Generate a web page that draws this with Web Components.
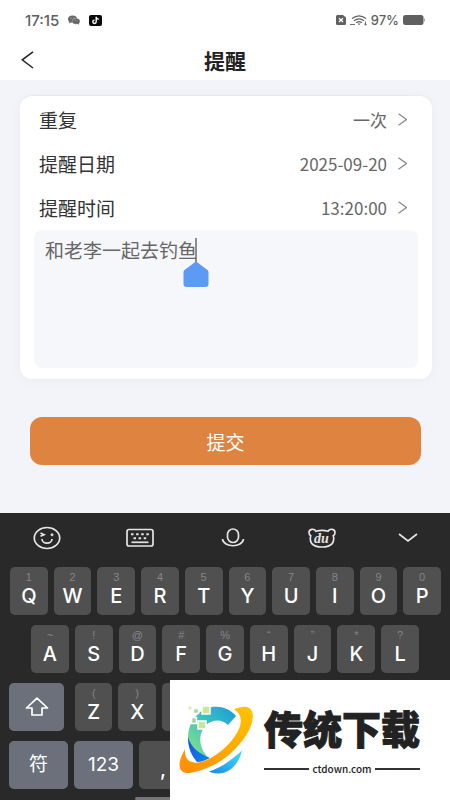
<!DOCTYPE html>
<html lang="zh-CN">
<head>
<meta charset="utf-8">
<meta name="viewport" content="width=device-width, initial-scale=1">
<title>提醒</title>
<style>
  body { margin: 0; background: #f3f4f9; font-family: "Noto Sans CJK SC", sans-serif; color: #333; }
</style>
</head>
<body>
<reminder-app></reminder-app>
<script>
const define = (name, css, html) => {
  const template = document.createElement('template');
  template.innerHTML = `<style>*{box-sizing:border-box}button{font:inherit;color:inherit;background:none;border:0;margin:0;padding:0}svg{display:block}${css}</style>${html}`;
  customElements.define(name, class extends HTMLElement {
    constructor() {
      super();
      this.attachShadow({ mode: 'open' }).append(template.content.cloneNode(true));
    }
  });
};

define('status-bar', `
  :host { display: flex; align-items: center; justify-content: space-between; height: 40px; padding: 0 25px; background: #fff; color: #606060; font-family: Inter, sans-serif; font-weight: 500; }
  div { display: flex; align-items: center; }
  .left { gap: 9px; } .right { gap: 4px; }
  time { font-size: 15px; } .pct { font-size: 13px; }
`, `
  <div class="left"><time>17:15</time>
    <svg width="12" height="10" viewBox="0 0 12 10"><ellipse cx="4.5" cy="4" rx="4.5" ry="3.6" fill="#666"/><path d="M1.5 6 1 8.6 4 7z" fill="#666"/><ellipse cx="8" cy="6.3" rx="4" ry="3" fill="#666" stroke="#fff" stroke-width=".3"/><path d="m9 8.500 2 1.300-.2-2z" fill="#666"/><g fill="#ddd"><circle cx="3" cy="3" r=".5"/><circle cx="6" cy="3" r=".5"/><circle cx="7" cy="5.700" r=".4"/><circle cx="9.500" cy="5.700" r=".4"/></g></svg>
    <svg width="13" height="11" viewBox="0 0 13 11"><rect width="13" height="11" rx="2" fill="#080808"/><path d="M7.200 1.800v5a1.700 1.700 0 1 1-1.700-1.700M7.200 2c.2 1.400 1.100 2.100 2.600 2.200" fill="none" stroke="#fff" stroke-width="1.400"/></svg>
  </div>
  <div class="right">
    <svg width="10" height="10" viewBox="0 0 10 10"><path d="M1.500 0H7l3 2.500v6A1.500 1.500 0 0 1 8.500 10h-7A1.500 1.500 0 0 1 0 8.500v-7A1.500 1.500 0 0 1 1.500 0z" fill="#606060"/><path d="m3 3.200 4 3.800M7 3.200 3 7" stroke="#fff" stroke-width="1.300"/></svg>
    <svg width="17" height="11" viewBox="0 0 17 11" fill="none" stroke="#606060" stroke-width="1.200"><path d="M2 3.500Q9 -1.800 16 3.500M4 5.700Q9 2 14 5.700M6.200 7.700Q9 5.500 11.800 7.700"/><path d="m7.500 8.600 1.500 1.600 1.500-1.600z" fill="#606060" stroke="none"/><path d="M0 9.500h5M15.500 6.500v3.500M14.300 9l1.200 1.200L16.700 9" stroke-width=".9"/></svg>
    <span class="pct">97%</span>
    <svg width="22" height="10" viewBox="0 0 22 10"><rect width="20.500" height="10" rx="2.500" fill="#606060"/><path d="M21.300 3.500v3" stroke="#999" stroke-width="1"/></svg>
  </div>`);

define('page-header', `
  :host { display: grid; grid-template-columns: 40px 1fr 40px; align-items: center; height: 40px; padding: 0 8px; background: #fff; color: #222; }
  button { width: 40px; height: 40px; padding-left: 13px; }
  h1 { margin: 0; font-size: 21px; line-height: 30px; font-weight: 700; text-align: center; }
`, `
  <button type="button" aria-label="返回"><svg width="13" height="18" viewBox="0 0 13 18"><path d="M12 .8 1.200 8.800 12 17" fill="none" stroke="#222" stroke-width="1.500"/></svg></button>
  <h1><slot></slot></h1>`);

define('form-row', `
  :host { display: block; }
  label { display: flex; align-items: center; justify-content: space-between; height: 44px; font-size: 19px; }
  button { display: flex; align-items: center; gap: 11px; font-size: 17px; color: #666; }
`, `
  <label><slot name="label"></slot>
    <button type="button"><slot></slot>
      <svg width="9" height="13" viewBox="0 0 9 13"><path d="m.5.700 8 5.800-8 5.800" fill="none" stroke="#888" stroke-width="1.200"/></svg></button>
  </label>`);

define('note-field', `
  :host { display: block; position: relative; }
  textarea { display: block; width: 100%; height: 138px; margin: 0; padding: 6px 11px; border: 0; outline: 0; resize: none; border-radius: 8px; background: #f6f7fa; color: #666; font: 19px/28px "Noto Sans CJK SC", sans-serif; }
  .caret { position: absolute; left: 149px; top: 8px; }
`, `
  <textarea aria-label="提醒内容">和老李一起去钓鱼</textarea>
  <svg class="caret" width="26" height="50" viewBox="0 0 26 50"><path d="M13 0v24" stroke="#555" stroke-width="1.300"/><path d="M11.500 24.400q1.500-1.200 3 0l10 7.600q1 .8 1 2.200V46q0 3-3 3h-19q-3 0-3-3V34.200q0-1.400 1-2.200z" fill="#5b9af5"/></svg>`);

define('reminder-form', `
  :host { display: block; flex: 1; padding: 16px 18px 48px 20px; }
  .card { border-radius: 12px; background: #fff; padding: 1px 14px 11px; box-shadow: 0 -1px 1px rgba(0,0,0,.03), 0 1px 12px rgba(0,0,0,.04); }
  .rows { padding: 0 11px 1px 5px; }
  .submit { display: block; width: calc(100% - 21px); height: 48px; margin: 38px 11px 0 10px; border-radius: 12px; background: #df8340; color: #fff; font-size: 19px; }
`, `
  <div class="card">
    <div class="rows">
      <form-row><span slot="label">重复</span>一次</form-row>
      <form-row><span slot="label">提醒日期</span>2025-09-20</form-row>
      <form-row><span slot="label">提醒时间</span>13:20:00</form-row>
    </div>
    <note-field></note-field>
  </div>
  <button class="submit" type="button">提交</button>`);

define('key-cap', `
  :host { display: block; flex: 1; min-width: 0; height: 48px; }
  button { display: flex; flex-direction: column; align-items: center; width: 100%; height: 100%; padding-top: 3px; border-radius: 5px; background: #505050; color: #fff; font: 500 20px/24px Inter, "Noto Sans CJK SC", sans-serif; }
  ::slotted([slot=hint]) { font-family: "Liberation Sans", sans-serif; font-size: 11px; font-weight: 400; line-height: 14px; color: #85858c; }
  :host([wide]) button { justify-content: center; padding: 0; background: #6b707b; font-size: 19px; font-weight: 400; }
  :host([low]) button { padding-top: 16px; padding-left: 4px; }
`, `<button type="button"><slot name="hint"></slot><slot></slot></button>`);

const keys = (letters, hints) => [...letters].map((c, i) => `<key-cap><span slot="hint">${hints[i]}</span>${c}</key-cap>`).join('');

define('soft-keyboard', `
  :host { display: block; background: #292929; padding-bottom: 11px; position: relative; }
  .tools { display: grid; grid-template-columns: 93fr 94fr 91fr 87fr 85fr; height: 54px; padding-bottom: 4px; }
  .tools button { display: grid; place-items: center; }
  .tools svg { fill: none; stroke: #e5e5e5; stroke-width: 1.700; }
  .rows { display: grid; gap: 10px; }
  .row { display: flex; gap: 6px; padding: 0 9px 0 10px; }
  .second { padding: 0 31px; }
  .third, .fourth { padding-left: 9px; }
  .shift { flex: 0 0 55px; margin-right: 5px; }
  .back { flex: 0 0 62px; }
  .sym, .num { flex: 0 0 59px; }
  .comma { flex: 0 0 44px; }
  .home { position: absolute; left: 30%; right: 30%; bottom: 0; height: 3px; background: #777; border-radius: 2px; }
`, `
  <div class="tools">
    <button type="button" aria-label="表情"><svg width="28" height="24" viewBox="0 0 28 24"><ellipse cx="14" cy="12" rx="12.700" ry="10.500"/><path d="M9 13c0 5.500 10 5.500 10 0M7.500 7l3.500 1.700-3.500 1.600"/><circle cx="19" cy="8.800" r="1" fill="#e5e5e5" stroke-width="1"/></svg></button>
    <button type="button" aria-label="键盘"><svg width="28" height="20" viewBox="0 0 28 20"><rect x="1" y="1.500" width="26" height="16.500" rx="2"/><path d="M5 6.300h18" stroke-width="2" stroke-dasharray="2.500 2.600"/><path d="M7.500 10.300h14" stroke-width="2" stroke-dasharray="2.500 2.600"/><path d="M5.500 14.300h17"/></svg></button>
    <button type="button" aria-label="语音"><svg width="24" height="20" viewBox="0 0 24 20"><rect x="6.500" y="1" width="11" height="13.500" rx="5.500"/><path d="M1.500 11c1 9 20 9 21 0"/></svg></button>
    <button type="button" aria-label="输入法"><svg width="28" height="20" viewBox="0 0 28 20"><path d="M8 3.200Q14 1.600 20 3.200C22 0 27 1 27 4.500c0 1.800-1 2.800-1.700 3.200 1.500 6-.8 11.300-11.300 11.300S1.200 13.700 2.700 7.700C2 7.300 1 6.300 1 4.500 1 1 6 0 8 3.200z"/><text x="13.500" y="14.500" text-anchor="middle" fill="#e5e5e5" stroke="none" font-family="Liberation Serif, serif" font-size="14" font-weight="700" font-style="italic">du</text></svg></button>
    <button type="button" aria-label="收起键盘"><svg width="20" height="10" viewBox="0 0 20 10"><path d="m1 1 9 7 9-7"/></svg></button>
  </div>
  <div class="rows">
    <div class="row">${keys('QWERTYUIOP', '1234567890')}</div>
    <div class="row second">${keys('ASDFGHJKL', '~!@#%“”*?')}</div>
    <div class="row third">
      <key-cap class="shift" wide aria-label="大写"><svg width="24" height="20" viewBox="0 0 24 20"><path d="M12 1.200 22.500 11H17v7H7v-7H1.500z" fill="none" stroke="#fff" stroke-width="1.700" stroke-linejoin="round"/></svg></key-cap>
      ${keys('ZX', '()')}<key-cap></key-cap><key-cap></key-cap><key-cap></key-cap><key-cap></key-cap><key-cap></key-cap>
      <key-cap class="back" wide></key-cap>
    </div>
    <div class="row fourth">
      <key-cap class="sym" wide>符</key-cap><key-cap class="num" wide>123</key-cap><key-cap class="comma" low>,</key-cap><key-cap></key-cap>
    </div>
  </div>
  <div class="home"></div>`);

define('site-mark', `
  :host { display: flex; align-items: center; gap: 10px; width: 280px; height: 120px; padding: 0 10px; background: #fff; color: #222; }
  .logo { flex: none; overflow: visible; }
  .words { width: 156px; }
  strong { display: block; font-size: 39px; line-height: 46px; font-weight: 900; text-align: center; white-space: nowrap; -webkit-text-stroke: 1px #222; }
  .url { display: flex; align-items: center; gap: 3px; font-size: 10px; line-height: 14px; margin-top: 12px; font-weight: 500; color: #222; }
  .url::before, .url::after { content: ""; flex: 1; height: 2px; background: #333; }
`, `
  <svg class="logo" width="74" height="70" viewBox="0 0 74 70">
    <defs>
      <linearGradient id="ring" x1="1" y1="0" x2="0" y2="1"><stop stop-color="#159bdc"/><stop offset=".5" stop-color="#42c4bd"/><stop offset="1" stop-color="#90e67d"/></linearGradient>
      <linearGradient id="orbit" x1="0" y1="1" x2="1" y2="0"><stop stop-color="#ff8d08"/><stop offset="1" stop-color="#ffc400"/></linearGradient>
      <linearGradient id="deep" x1="0" y1="0" x2="1" y2="1"><stop stop-color="#174ee5"/><stop offset="1" stop-color="#1387ed"/></linearGradient>
      <linearGradient id="base" x1="0" y1="1" x2="1" y2="0"><stop stop-color="#168be9"/><stop offset="1" stop-color="#42dcff"/></linearGradient>
    </defs>
    <path d="M56 11C46-1 28-1 18 9 6 20 5 39 14 53l15 0C18 43 18 28 26 20c7-6 16-6 22 0z" fill="url(#ring)"/>
    <path d="M8 32c0 10 3 18 9 25 5 0 9-2 13-4C20 49 11 43 8 32z" fill="url(#deep)"/>
    <path d="M29 66.500C41 63 53 54 62 45.500 58 63 44 73 29 66.500z" fill="url(#base)"/>
    <path d="M54 4.500C63 0 71 1 72.500 8 75 20 64 36 51 48 38 60 22 66 10 68-3 69-3 58 5 44c-1 14 9 17 24 10C41 48 53 36 58 26 63 16 61 8 54 4.500z" fill="url(#orbit)"/>
    <g stroke="#fff" stroke-width="1.500"><path d="M22 1h8v8h-8zM18 16h8v8h-8z" fill="#c5e89b"/><path d="M11.500 12.500h5v6h-5zM13.500 3.500h5v5h-5z" fill="#a2d89a"/></g>
    <path d="M8.500 1.500h3v3h-3z" fill="#dcecb0"/>
  </svg>
  <div class="words"><strong>传统下载</strong><div class="url">ctdown.com</div></div>`);

define('reminder-app', `
  :host { display: flex; flex-direction: column; min-height: 100vh; position: relative; overflow: hidden; }
  site-mark { position: absolute; right: 0; bottom: 0; }
`, `
  <status-bar></status-bar>
  <page-header>提醒</page-header>
  <reminder-form></reminder-form>
  <soft-keyboard></soft-keyboard>
  <site-mark></site-mark>`);
</script>
</body>
</html>
